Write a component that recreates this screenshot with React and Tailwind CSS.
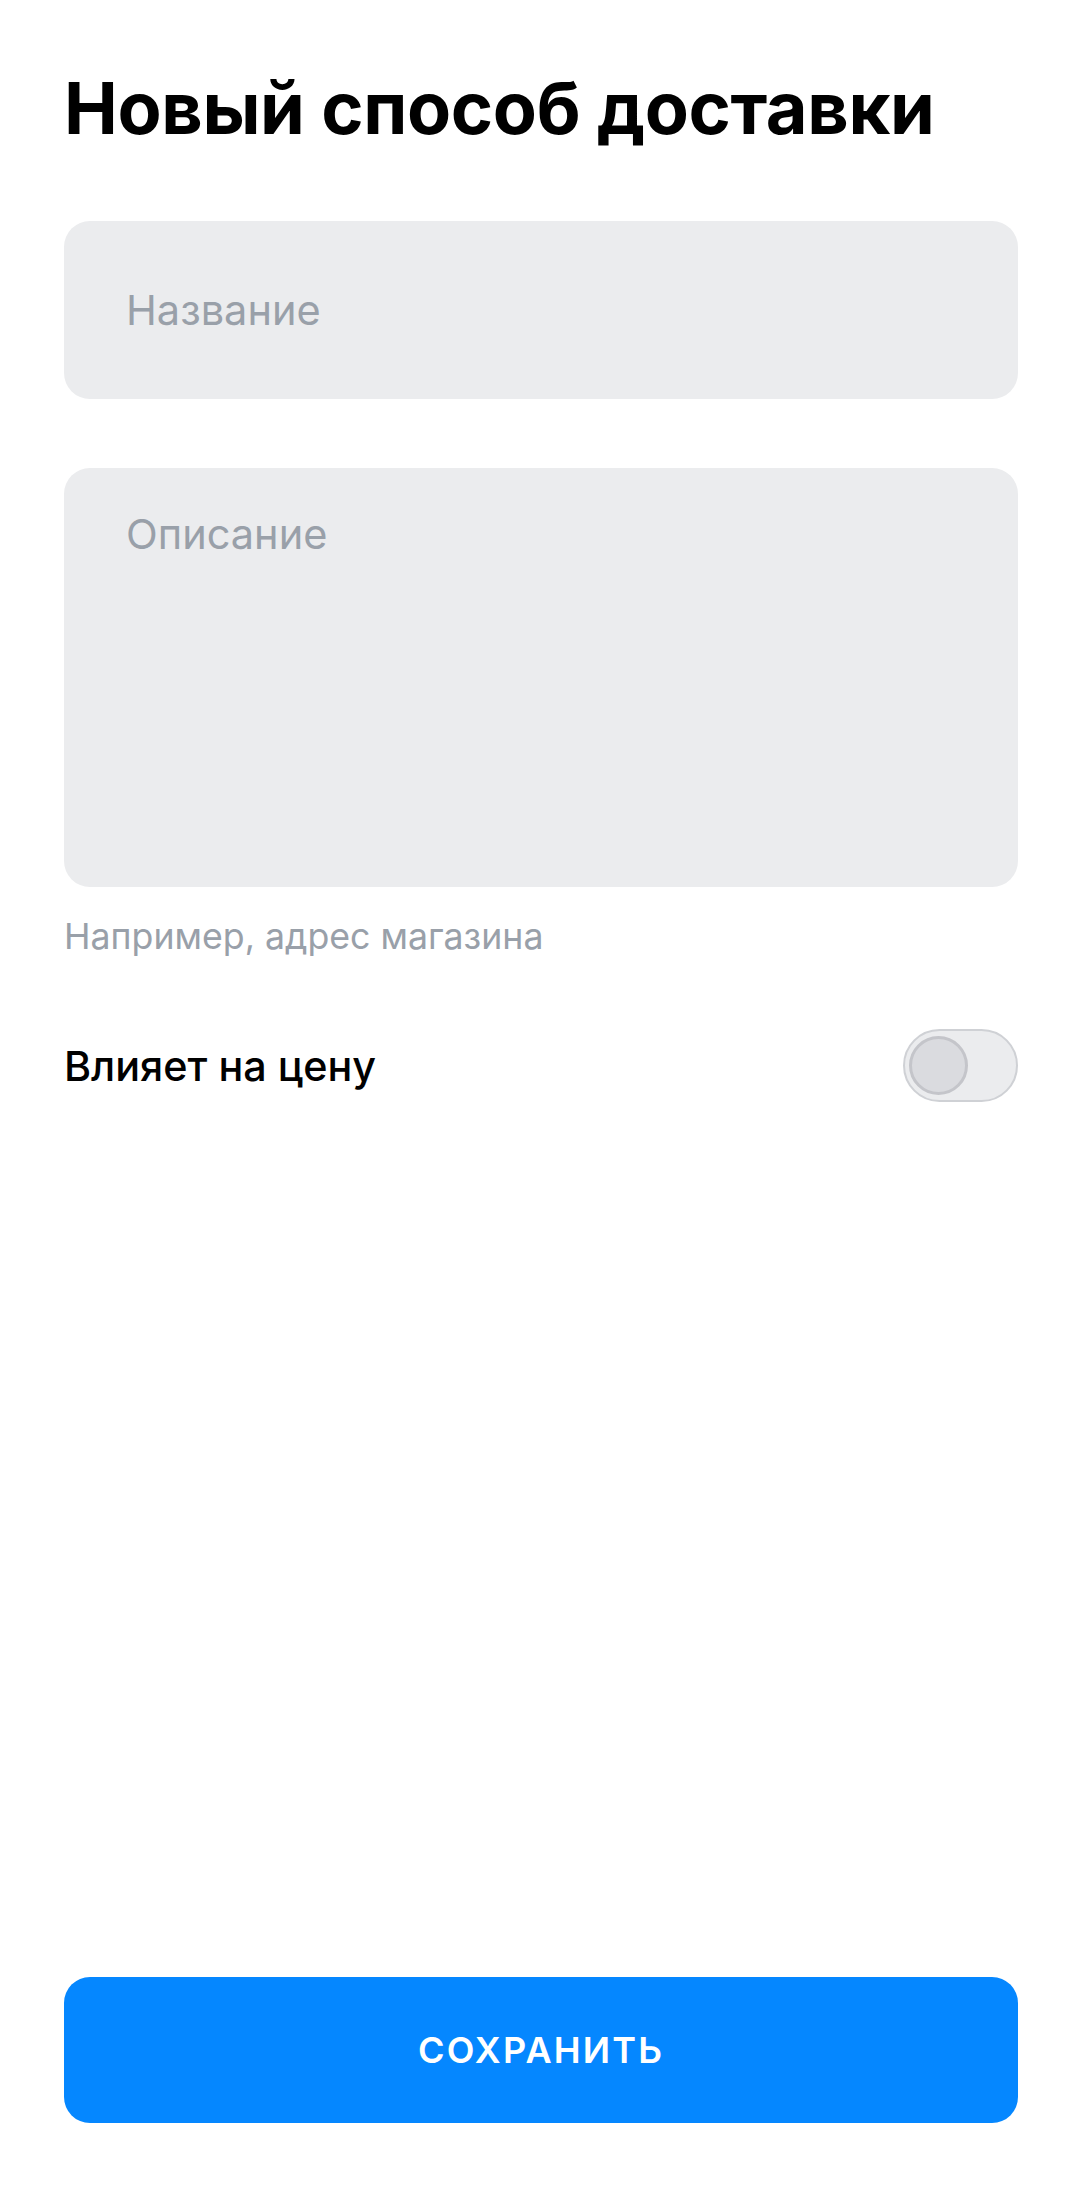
export default function App() {
  return (
    <div className="min-h-[2202px] flex flex-col bg-white px-16 font-['Inter',sans-serif]">
      <h1 className="pt-[72px] text-[72px] leading-[72px] font-bold text-black tracking-[-0.005em]">
        Новый способ доставки
      </h1>
      <div className="mt-[77px] h-[178px] flex items-center rounded-[26px] bg-[#ebecee] pl-[62px]">
        <span className="text-[41.5px] leading-[48px] text-[#99a0a9]">Название</span>
      </div>
      <div className="mt-[69px] h-[419px] rounded-[26px] bg-[#ebecee] pl-[62px] pt-[42px]">
        <span className="block text-[41.5px] leading-[48px] text-[#99a0a9]">Описание</span>
      </div>
      <p className="mt-[27px] text-[35.7px] leading-[44px] text-[#99a0a9]">
        Например, адрес магазина
      </p>
      <div className="mt-[71px] h-[73px] flex items-center justify-between">
        <span className="text-[41.3px] leading-[48px] font-medium text-black">Влияет на цену</span>
        <div className="w-[115px] h-[73px] rounded-full border-2 border-[#cfd1d5] bg-[#ebecee] flex items-center pl-[4px]">
          <div className="w-[59px] h-[59px] rounded-full border-[3px] border-[#c4c5ca] bg-[#dadbdf]" />
        </div>
      </div>
      <div className="flex-1" />
      <button className="mb-[79px] h-[146px] w-full rounded-[26px] bg-[#0587ff] text-white text-[36px] font-semibold tracking-[0.06em]">
        СОХРАНИТЬ
      </button>
    </div>
  );
}
